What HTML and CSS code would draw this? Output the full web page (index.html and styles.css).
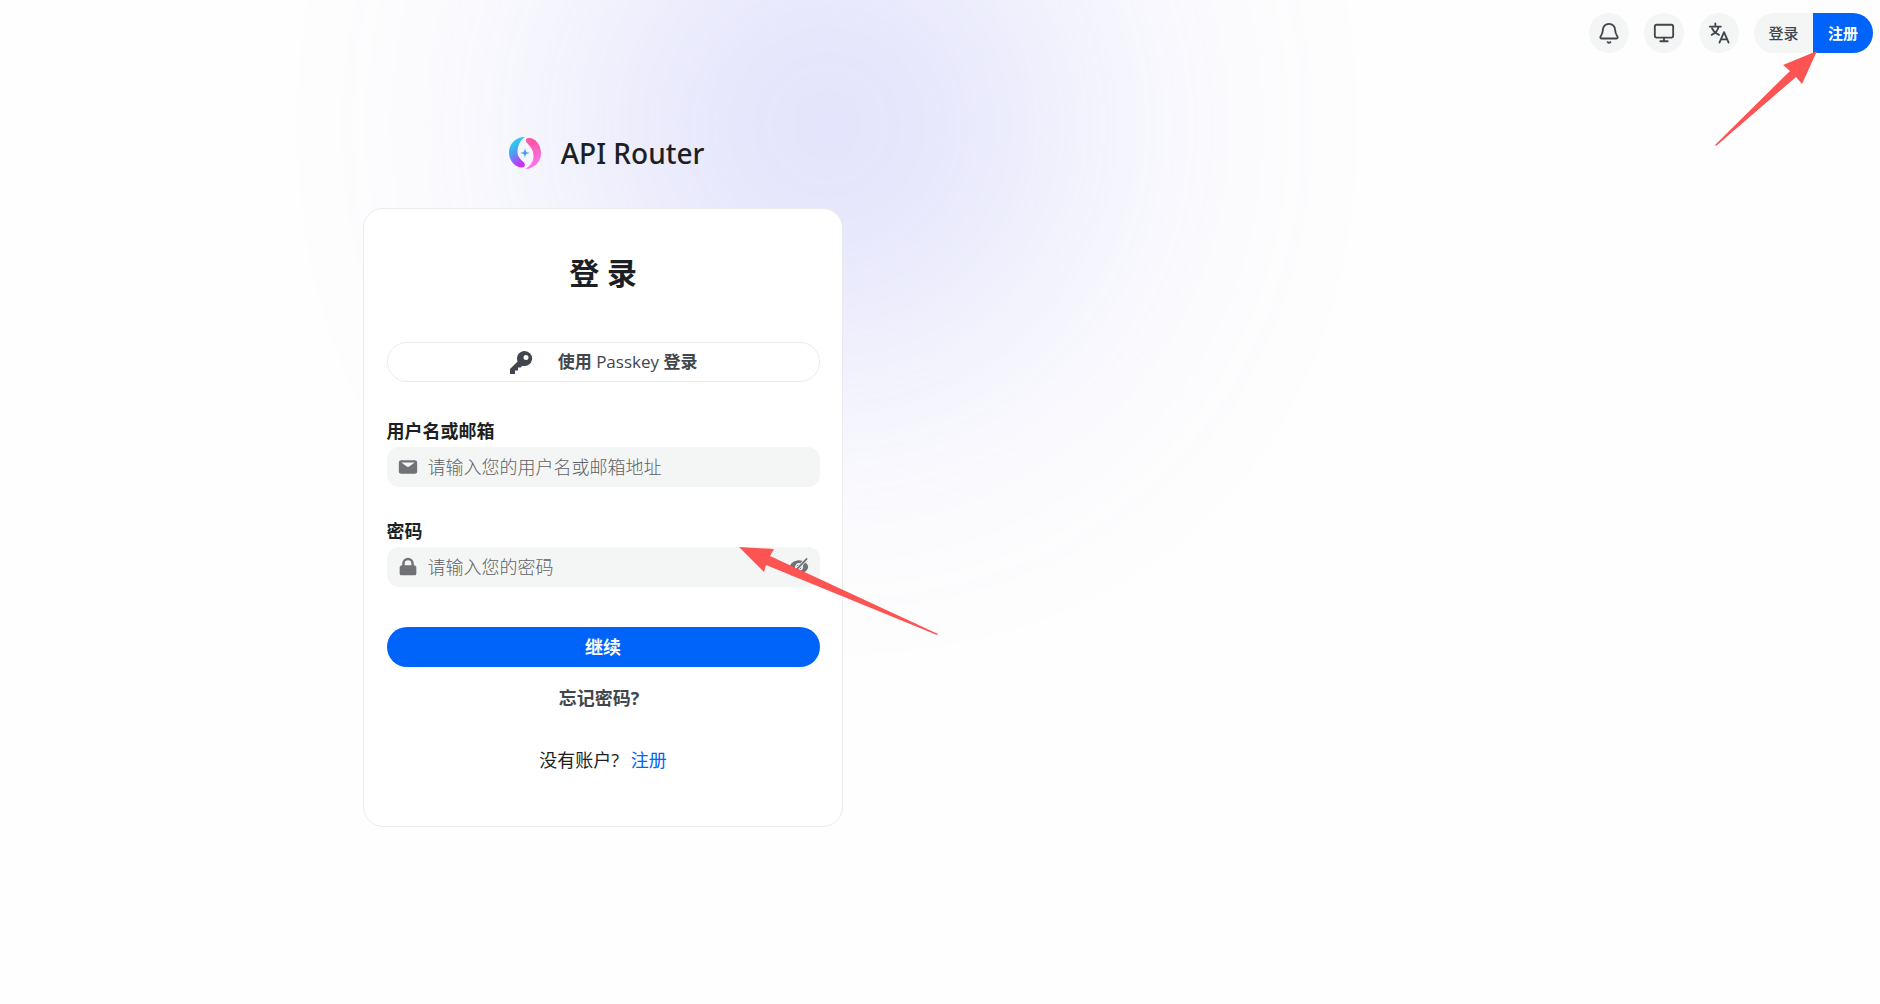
FILE: index.html
```html
<!DOCTYPE html>
<html lang="zh-CN">
<head>
    <meta charset="UTF-8">
    <meta name="viewport" content="width=device-width, initial-scale=1.0">
    <title>API Router - 登录</title>
    <link rel="stylesheet" href="styles.css">
</head>
<body>
    <div class="blur-ball"></div>

    <!-- 顶部导航 -->
    <header class="header">
        <button class="icon-button" type="button" aria-label="通知">
            <svg viewBox="0 0 24 24"><path d="M10.500 22a2.200 2.200 0 0 0 3 0M2.500 16.500c0 .8.6 1.500 1.500 1.500h16c.9 0 1.500-.7 1.500-1.500C20.500 14.500 19 13 18.700 9A6.700 6.700 0 0 0 12 2a6.700 6.700 0 0 0-6.700 7c-.3 4-1.800 5.500-2.800 7.500z"/></svg>
        </button>
        <button class="icon-button" type="button" aria-label="主题">
            <svg viewBox="0 0 24 24"><rect x="2" y="3" width="20" height="14" rx="2"/><path d="M8 21h8M12 17v4"/></svg>
        </button>
        <button class="icon-button" type="button" aria-label="语言">
            <svg viewBox="0 0 24 24"><path d="M2 5h12M8 1.500V5M4 14c4-2 7-5 7.500-9M4.500 7c1.500 3.500 4 5.500 7.500 7M12.500 22.500 17.500 11l5 11.500M14.200 19h6.600"/></svg>
        </button>
        <div class="auth-group">
            <a class="auth-link" href="#login">登录</a>
            <a class="auth-link auth-link-primary" href="#register">注册</a>
            <svg class="arrow arrow-register" viewBox="0 0 102 95"><path d="M102 0 68 14l7 6L0 94l1 1L81 26l6 7z"/></svg>
        </div>
    </header>

    <!-- 登录区域 -->
    <main class="page">
        <div class="login">
            <div class="brand">
                <svg class="brand-logo" viewBox="0 0 48 48">
                    <defs>
                        <linearGradient id="logoLeft" x1="0" y1="0" x2="0.4" y2="1">
                            <stop offset="0" stop-color="#16f0ee"/>
                            <stop offset="0.500" stop-color="#45a8f3"/>
                            <stop offset="1" stop-color="#c932fb"/>
                        </linearGradient>
                        <linearGradient id="logoRight" x1="0" y1="0" x2="0" y2="1">
                            <stop offset="0" stop-color="#fb559f"/>
                            <stop offset="1" stop-color="#fc78f5"/>
                        </linearGradient>
                    </defs>
                    <path fill="url(#logoLeft)" d="M24 8C14 8 8 15.500 8 23.500 8 32 14.500 38.500 21 38.500c3 0 4-3 1.500-5.500-3-3-6-5-6-10 0-6 2.500-12 7.500-15z"/>
                    <path fill="url(#logoRight)" d="M27.500 9c6.500-.5 12.500 6.500 12.500 15 0 9-7 16-16 16 5-2.500 8.500-7 8.500-13 0-6-3-9-6-12.500-2.500-2.500-2-5.300 1-5.500z"/>
                    <path fill="#45a0f3" d="M24 19c.5 3.600 1.400 4.500 5 5-3.600.5-4.500 1.400-5 5-.5-3.600-1.400-4.500-5-5 3.600-.5 4.500-1.400 5-5z"/>
                </svg>
                <span class="brand-name">API Router</span>
            </div>

            <div class="card">
                <h1 class="card-title">登 录</h1>

                <button class="passkey-button" type="button">
                    <svg viewBox="0 0 24 24"><path fill-rule="evenodd" d="M15.500 1a7.500 7.500 0 1 1-2 14.700L11.500 17.500H9v3H6V24H1v-5l7.600-7.600A7.500 7.500 0 0 1 15.500 1zm1.500 4a2.500 2.500 0 1 0 0 5 2.500 2.500 0 0 0 0-5z"/></svg>
                    <span>使用 <span class="latin">Passkey</span> 登录</span>
                </button>

                <form class="form">
                    <div class="field">
                        <label for="username">用户名或邮箱</label>
                        <div class="input-box">
                            <svg viewBox="0 0 24 24"><path fill-rule="evenodd" d="M4 4h16a3 3 0 0 1 3 3v10a3 3 0 0 1-3 3H4a3 3 0 0 1-3-3V7a3 3 0 0 1 3-3zm0 2.500 6.500 5c1 .7 2 .7 3 0l6.500-5z"/></svg>
                            <input type="text" id="username" name="username" placeholder="请输入您的用户名或邮箱地址">
                        </div>
                    </div>
                    <div class="field">
                        <label for="password">密码</label>
                        <div class="input-box">
                            <svg viewBox="0 0 24 24"><path fill-rule="evenodd" d="M5 10V8a7 7 0 0 1 14 0v2a3 3 0 0 1 3 3v7a2 2 0 0 1-2 2H4a2 2 0 0 1-2-2v-7a3 3 0 0 1 3-3zm3 0h8V8a4 4 0 0 0-8 0z"/></svg>
                            <input type="password" id="password" name="password" placeholder="请输入您的密码">
                            <button class="eye-button" type="button" aria-label="显示密码">
                                <svg viewBox="0 0 24 24"><path d="m21 1 1.500 1.500-19 20L2 21zM12 4c1.500 0 3 .3 4.200.8l-2.700 2.800A5 5 0 0 0 7.300 14l-3 3.200C2.300 15.600 1 13.500 1 12c0-3.500 5-8 11-8zm7.700 2.700C21.800 8.300 23 10.400 23 12c0 3.500-5 8-11 8-1.500 0-3-.3-4.300-.8l2.600-2.700A5 5 0 0 0 16.600 10zM12 9l-3 3a3 3 0 0 1 3-3zm3 3-3 3a3 3 0 0 0 3-3z"/></svg>
                            </button>
                            <svg class="arrow arrow-password" viewBox="0 0 199 88"><path d="m0 0 35 2-4 7 168 78-1 1L27 18l-2 7z"/></svg>
                        </div>
                    </div>
                    <button class="submit-button" type="submit">继续</button>
                </form>

                <a class="forgot-link" href="#reset">忘记密码?</a>
                <p class="register-text">没有账户? <a href="#register">注册</a></p>
            </div>
        </div>
    </main>
</body>
</html>
```

FILE: styles.css
```css
* {
    box-sizing: border-box;
}

body {
    position: relative;
    min-height: 100vh;
    margin: 0;
    overflow: hidden;
    background: #fefefe;
    color: #1c1f23;
    font-family: "Open Sans", "Noto Sans CJK SC", sans-serif;
    font-size: 18px;
    line-height: 24px;
}

a {
    color: #0064fa;
    text-decoration: none;
}

button {
    border: none;
    padding: 0;
    font: inherit;
    cursor: pointer;
}

/* 背景光晕 */
.blur-ball {
    position: absolute;
    top: -100px;
    left: 44%;
    width: 450px;
    height: 450px;
    margin-left: -225px;
    border-radius: 50%;
    background: #6366f1;
    filter: blur(170px);
    opacity: 0.27;
}

/* 顶部导航 */
.header {
    position: relative;
    z-index: 2;
    display: flex;
    justify-content: flex-end;
    gap: 15px;
    padding: 13px 7px;
}

.icon-button {
    display: flex;
    align-items: center;
    justify-content: center;
    width: 40px;
    height: 40px;
    border-radius: 50%;
    background: #f4f6f5;
}

.icon-button svg {
    width: 22px;
    height: 22px;
    fill: none;
    stroke: #41464c;
    stroke-width: 2;
    stroke-linecap: round;
    stroke-linejoin: round;
}

.auth-group {
    position: relative;
    display: flex;
}

.auth-link {
    width: 59px;
    border-radius: 20px 0 0 20px;
    background: #f4f6f5;
    color: #41464c;
    font-size: 15px;
    font-weight: 500;
    line-height: 40px;
    text-align: center;
}

.auth-link-primary {
    width: 60px;
    border-radius: 0 20px 20px 0;
    background: #0064fa;
    color: #fff;
    font-weight: 700;
}

/* 红色指示箭头 */
.arrow {
    position: absolute;
    fill: #fb5452;
    pointer-events: none;
}

.arrow-register {
    top: 38px;
    right: 56px;
    width: 102px;
    height: 95px;
}

.input-box .arrow-password {
    top: 0;
    left: 352px;
    width: 199px;
    height: 88px;
    fill: #fb5452;
}

/* 登录区域 */
.page {
    position: relative;
    display: grid;
    grid-template-columns: 25fr 14fr;
    padding-top: 63px;
}

.login {
    width: 100%;
    max-width: 480px;
    margin: 0 auto;
}

.brand {
    display: flex;
    align-items: center;
    justify-content: center;
    gap: 12px;
    margin-bottom: 31px;
}

.brand-logo {
    width: 48px;
    height: 48px;
}

.brand-name {
    font-family: "Noto Sans", sans-serif;
    font-size: 28px;
    font-weight: 500;
    line-height: 40px;
}

.card {
    display: flex;
    flex-direction: column;
    padding: 44px 22px 54px 23px;
    border: 1px solid #ebebed;
    border-radius: 20px;
    background: #fff;
}

.card-title {
    margin: 0 0 49px;
    font-size: 30px;
    font-weight: 700;
    line-height: 40px;
    text-align: center;
}

.passkey-button {
    display: flex;
    align-items: center;
    justify-content: center;
    gap: 25px;
    height: 40px;
    border: 1px solid #ebebed;
    border-radius: 20px;
    background: transparent;
    color: #41464c;
    font-size: 17px;
    font-weight: 700;
}

.passkey-button svg {
    width: 24px;
    height: 24px;
    fill: #41464c;
}

.latin {
    font-weight: 500;
}

.form {
    display: flex;
    flex-direction: column;
    gap: 32px;
    margin-top: 37px;
}

.field {
    display: flex;
    flex-direction: column;
    gap: 4px;
}

.field label {
    font-weight: 700;
}

.input-box {
    position: relative;
    display: flex;
    align-items: center;
    gap: 10px;
    height: 40px;
    padding: 0 11px;
    border-radius: 12px;
    background: #f4f6f5;
}

.input-box svg {
    flex: none;
    width: 20px;
    height: 20px;
    fill: #707276;
}

.input-box input {
    flex: 1;
    min-width: 0;
    padding: 0;
    border: none;
    outline: none;
    background: transparent;
    color: #1c1f23;
    font: inherit;
    font-weight: 300;
}

.input-box input::placeholder {
    color: #606266;
    opacity: 1;
}

.eye-button {
    display: flex;
    background: transparent;
}

.submit-button {
    height: 40px;
    margin-top: 8px;
    border-radius: 20px;
    background: #0064fa;
    color: #fff;
    font-weight: 700;
}

.forgot-link {
    margin-top: 19px;
    padding-right: 8px;
    color: #41464c;
    font-weight: 700;
    text-align: center;
}

.register-text {
    margin: 38px 0 0;
    text-align: center;
}

.register-text a {
    margin-left: 7px;
}
```
